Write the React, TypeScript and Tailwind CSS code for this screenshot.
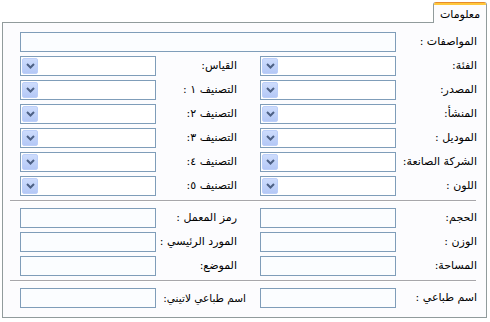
import React from 'react';

const font = "font-['Tahoma','DejaVu_Sans',sans-serif]";

const Chevron = () => (
  <svg width="9" height="6" viewBox="0 0 9 6" className="block">
    <path d="M1 1 L4.5 4.5 L8 1" fill="none" stroke="#4d6185" strokeWidth="2" />
  </svg>
);

const Combo = () => (
  <div className="w-[136px] h-[20px] border border-[#7f9db9] bg-white flex items-center pl-px">
    <div className="w-[16px] h-[16px] rounded-[2px] bg-gradient-to-b from-[#cddcfc] to-[#b4c8f6] border border-[#bccff9] flex items-center justify-center">
      <Chevron />
    </div>
  </div>
);

const TextBox = ({ wide = false }: { wide?: boolean }) => (
  <div className={`${wide ? 'w-[376px]' : 'w-[136px]'} h-[20px] border border-[#7f9db9] bg-[#fbfdff]`} />
);

const Label = ({ text, right }: { text: string; right?: boolean }) => (
  <div
    dir="rtl"
    className={`${right ? 'w-[90px] pr-[9px]' : 'w-[104px] pr-[23px]'} text-right whitespace-nowrap leading-[20px]`}
  >
    {text}
  </div>
);

const Separator = () => (
  <div className="ml-[7px] mr-[10px] mt-[4px] mb-[6px]">
    <div className="h-px bg-[#a7a6aa]" />
    <div className="h-px bg-white" />
  </div>
);

type RowProps = { left: React.ReactNode; leftLabel: string; right: React.ReactNode; rightLabel: string };

const Row = ({ left, leftLabel, right, rightLabel }: RowProps) => (
  <div className="flex items-center h-[20px]">
    {left}
    <Label text={leftLabel} />
    {right}
    <Label text={rightLabel} right />
  </div>
);

const comboRows = [
  ['القياس:', 'الفئة:'],
  ['التصنيف ١ :', 'المصدر:'],
  ['التصنيف ٢:', 'المنشأ:'],
  ['التصنيف ٣:', 'الموديل :'],
  ['التصنيف ٤:', 'الشركة الصانعة:'],
  ['التصنيف ٥:', 'اللون :'],
];

const textRows = [
  ['رمز المعمل :', 'الحجم:'],
  ['المورد الرئيسي :', 'الوزن :'],
  ['الموضع:', 'المساحة:'],
];

export default function App() {
  return (
    <div className={`w-[490px] h-[322px] bg-white text-[11px] text-black ${font}`}>
      {/* Tab strip */}
      <div className="h-[22px] flex justify-end pr-[3px] pt-[2px]">
        <div className="relative z-10 -mb-px w-[54px] h-[21px] border-x border-[#919b9c] rounded-t-[3px] bg-[#fcfcfe] overflow-hidden">
          <div className="h-px bg-[#e68b2c]" />
          <div className="h-[2px] bg-[#ffc73c]" />
          <div dir="rtl" className="text-center leading-[15px] pt-[2px]">معلومات</div>
        </div>
      </div>

      {/* Panel */}
      <div className="mx-[2px] mr-[3px] h-[296px] border border-[#919b9c] bg-[#fcfcfe] pt-[9px] pl-[17px]">
        <div className="flex flex-col gap-[4px]">
          <div className="flex items-center h-[20px]">
            <TextBox wide />
            <Label text="المواصفات :" right />
          </div>
          {comboRows.map(([l, r]) => (
            <Row key={r} left={<Combo />} leftLabel={l} right={<Combo />} rightLabel={r} />
          ))}
        </div>
        <div className="-ml-[17px]">
          <Separator />
        </div>
        <div className="flex flex-col gap-[4px]">
          {textRows.map(([l, r]) => (
            <Row key={r} left={<TextBox />} leftLabel={l} right={<TextBox />} rightLabel={r} />
          ))}
        </div>
        <div className="-ml-[17px]">
          <Separator />
        </div>
        <div className="flex items-center h-[20px]">
          <TextBox />
          <div dir="rtl" className="w-[104px] pr-[14px] text-right whitespace-nowrap leading-[20px] text-[10.5px]">
            اسم طباعي لاتيني:
          </div>
          <TextBox />
          <Label text="اسم طباعي :" right />
        </div>
      </div>
    </div>
  );
}
